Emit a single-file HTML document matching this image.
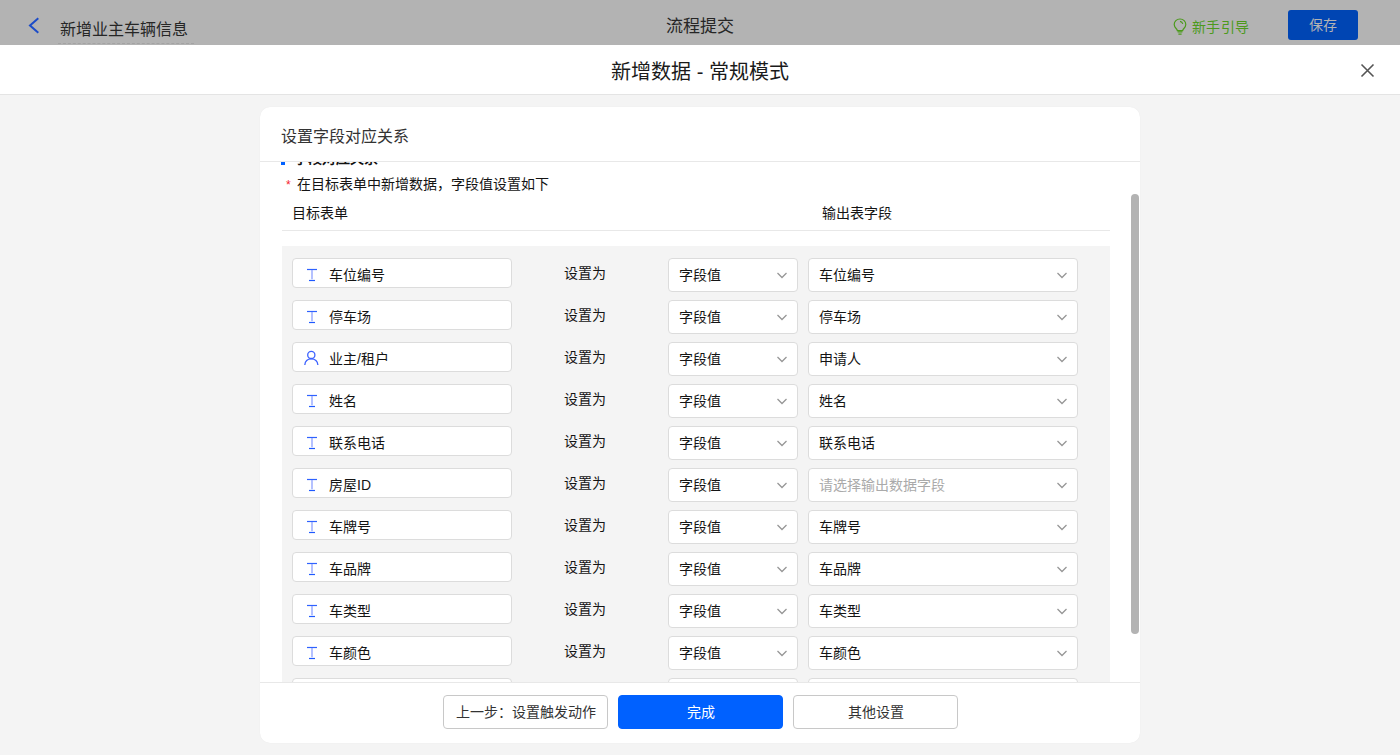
<!DOCTYPE html>
<html lang="zh-CN"><head><meta charset="utf-8">
<style>
*{box-sizing:border-box;margin:0;padding:0}
html,body{width:1400px;height:755px;overflow:hidden}
body{font-family:"Liberation Sans",sans-serif;background:#f4f4f4;position:relative;color:#141414}
.a{position:absolute;white-space:nowrap}
#top{left:0;top:0;width:1400px;height:45px;background:#b3b3b3}
#mh{left:0;top:45px;width:1400px;height:50px;background:#fff;border-bottom:1px solid #e4e4e4}
#card{left:260px;top:107px;width:880px;height:636px;background:#fff;border-radius:10px;overflow:hidden;box-shadow:0 0 1px rgba(0,0,0,0.08)}
.inp{position:absolute;left:10px;width:220px;height:30px;background:#fff;border:1px solid #dcdcdc;border-radius:4px}
.sel{position:absolute;height:34px;background:#fff;border:1px solid #dcdcdc;border-radius:4px}
.t14{font-size:14px;line-height:20px}
.chev{position:absolute}
.btn{position:absolute;top:588px;width:165px;height:34px;border:1px solid #c8c8c8;border-radius:4px;background:#fff;font-size:14px;line-height:32px;text-align:center;color:#333}
</style></head>
<body>
<div id="top" class="a">
  <svg class="a" style="left:28px;top:17px" width="12" height="17" viewBox="0 0 12 17"><path d="M10.3 1.3 L2 8.5 L10.3 15.7" fill="none" stroke="#1c4cc8" stroke-width="2"/></svg>
  <div class="a" style="left:60px;top:19px;font-size:16px;line-height:22px;color:#262626">新增业主车辆信息</div>
  <div class="a" style="left:58px;top:43px;width:136px;border-top:1px dashed #a3a3a3"></div>
  <div class="a" style="left:666px;top:16px;font-size:17px;line-height:22px;color:#262626">流程提交</div>
  <svg class="a" style="left:1173px;top:18px" width="14" height="18" viewBox="0 0 14 18"><path d="M7 1 C3.6 1 1.2 3.5 1.2 6.4 C1.2 8.8 2.6 10 3.9 11.4 L4.3 12.6 L9.7 12.6 L10.1 11.4 C11.4 10 12.8 8.8 12.8 6.4 C12.8 3.5 10.4 1 7 1 Z" fill="none" stroke="#4c9a1c" stroke-width="1.2"/><path d="M7 3.4 C8.3 3.6 9.5 4.6 9.8 6" fill="none" stroke="#4c9a1c" stroke-width="1.1"/><path d="M4.6 13.9 H9.4 M5.4 16.1 H8.6" stroke="#4c9a1c" stroke-width="1.1"/></svg>
  <div class="a" style="left:1192px;top:17px;font-size:14px;line-height:20px;color:#4c9a1c;letter-spacing:0.3px">新手引导</div>
  <div class="a" style="left:1288px;top:10px;width:70px;height:30px;background:#0045b3;border-radius:3px;color:#b3b3b3;font-size:14px;line-height:30px;text-align:center">保存</div>
</div>
<div id="mh" class="a">
  <div class="a" style="left:0;width:1400px;top:13px;text-align:center;font-size:20px;line-height:28px;color:#1a1a1a">新增数据 - 常规模式</div>
  <svg class="a" style="left:1360px;top:18px" width="15" height="15" viewBox="0 0 15 15"><path d="M1.5 1.5 L13.5 13.5 M13.5 1.5 L1.5 13.5" stroke="#555" stroke-width="1.6"/></svg>
</div>
<div id="card" class="a">
  <div class="a" style="left:21px;top:19px;font-size:16px;line-height:22px;color:#333">设置字段对应关系</div>
  <div class="a" style="left:0;top:54px;width:880px;height:1px;background:#e8e8e8"></div>
  <div class="a" id="scroll" style="left:0;top:55px;width:880px;height:520px;overflow:hidden">
    <div class="a" style="left:21px;top:-1px;width:4px;height:4px;background:#0061ff"></div>
    <div class="a" style="left:34px;top:-14px;font-size:14px;line-height:20px;font-weight:bold;color:#111">字段对应关系</div>
    <div class="a" style="left:26px;top:15px;font-size:12px;line-height:16px;color:#f5222d">*</div>
    <div class="a t14" style="left:37px;top:12px">在目标表单中新增数据，字段值设置如下</div>
    <div class="a t14" style="left:32px;top:41px">目标表单</div>
    <div class="a t14" style="left:562px;top:41px">输出表字段</div>
    <div class="a" style="left:22px;top:68px;width:828px;height:1px;background:#e8e8e8"></div>
    <div class="a" id="grid" style="left:22px;top:84px;width:828px;height:600px;background:#f4f4f4">
<div class="inp" style="top:12px"><svg class="a" style="left:13px;top:9px" width="12" height="14" viewBox="0 0 12 14"><path d="M1 1.5 H11" stroke="#2f62ff" stroke-width="1.2"/><path d="M6 2 V11.3" stroke="#8398ff" stroke-width="1.2"/><path d="M3 12.5 H9" stroke="#1f5aff" stroke-width="1.2"/></svg><div class="a t14" style="left:36px;top:6px">车位编号</div></div>
<div class="a t14" style="left:282px;top:17px">设置为</div>
<div class="sel" style="left:386px;top:12px;width:130px"><div class="a t14" style="left:10px;top:6px">字段值</div><svg class="chev" style="right:9px;top:13px" width="12" height="8" viewBox="0 0 12 8"><path d="M1.5 1 L6 5.5 L10.5 1" fill="none" stroke="#969696" stroke-width="1.25"/></svg></div>
<div class="sel" style="left:526px;top:12px;width:270px"><div class="a t14" style="left:10px;top:6px">车位编号</div><svg class="chev" style="right:9px;top:13px" width="12" height="8" viewBox="0 0 12 8"><path d="M1.5 1 L6 5.5 L10.5 1" fill="none" stroke="#969696" stroke-width="1.25"/></svg></div>
<div class="inp" style="top:54px"><svg class="a" style="left:13px;top:9px" width="12" height="14" viewBox="0 0 12 14"><path d="M1 1.5 H11" stroke="#2f62ff" stroke-width="1.2"/><path d="M6 2 V11.3" stroke="#8398ff" stroke-width="1.2"/><path d="M3 12.5 H9" stroke="#1f5aff" stroke-width="1.2"/></svg><div class="a t14" style="left:36px;top:6px">停车场</div></div>
<div class="a t14" style="left:282px;top:59px">设置为</div>
<div class="sel" style="left:386px;top:54px;width:130px"><div class="a t14" style="left:10px;top:6px">字段值</div><svg class="chev" style="right:9px;top:13px" width="12" height="8" viewBox="0 0 12 8"><path d="M1.5 1 L6 5.5 L10.5 1" fill="none" stroke="#969696" stroke-width="1.25"/></svg></div>
<div class="sel" style="left:526px;top:54px;width:270px"><div class="a t14" style="left:10px;top:6px">停车场</div><svg class="chev" style="right:9px;top:13px" width="12" height="8" viewBox="0 0 12 8"><path d="M1.5 1 L6 5.5 L10.5 1" fill="none" stroke="#969696" stroke-width="1.25"/></svg></div>
<div class="inp" style="top:96px"><svg class="a" style="left:9px;top:6px" width="18" height="18" viewBox="0 0 18 18"><circle cx="9.3" cy="5.9" r="3.6" fill="none" stroke="#3c62ff" stroke-width="1.3"/><path d="M2.8 16 C3.1 12.3 5.7 9.9 9.3 9.9 C12.9 9.9 15.5 12.3 15.9 16" fill="none" stroke="#3c62ff" stroke-width="1.3"/></svg><div class="a t14" style="left:36px;top:6px">业主/租户</div></div>
<div class="a t14" style="left:282px;top:101px">设置为</div>
<div class="sel" style="left:386px;top:96px;width:130px"><div class="a t14" style="left:10px;top:6px">字段值</div><svg class="chev" style="right:9px;top:13px" width="12" height="8" viewBox="0 0 12 8"><path d="M1.5 1 L6 5.5 L10.5 1" fill="none" stroke="#969696" stroke-width="1.25"/></svg></div>
<div class="sel" style="left:526px;top:96px;width:270px"><div class="a t14" style="left:10px;top:6px">申请人</div><svg class="chev" style="right:9px;top:13px" width="12" height="8" viewBox="0 0 12 8"><path d="M1.5 1 L6 5.5 L10.5 1" fill="none" stroke="#969696" stroke-width="1.25"/></svg></div>
<div class="inp" style="top:138px"><svg class="a" style="left:13px;top:9px" width="12" height="14" viewBox="0 0 12 14"><path d="M1 1.5 H11" stroke="#2f62ff" stroke-width="1.2"/><path d="M6 2 V11.3" stroke="#8398ff" stroke-width="1.2"/><path d="M3 12.5 H9" stroke="#1f5aff" stroke-width="1.2"/></svg><div class="a t14" style="left:36px;top:6px">姓名</div></div>
<div class="a t14" style="left:282px;top:143px">设置为</div>
<div class="sel" style="left:386px;top:138px;width:130px"><div class="a t14" style="left:10px;top:6px">字段值</div><svg class="chev" style="right:9px;top:13px" width="12" height="8" viewBox="0 0 12 8"><path d="M1.5 1 L6 5.5 L10.5 1" fill="none" stroke="#969696" stroke-width="1.25"/></svg></div>
<div class="sel" style="left:526px;top:138px;width:270px"><div class="a t14" style="left:10px;top:6px">姓名</div><svg class="chev" style="right:9px;top:13px" width="12" height="8" viewBox="0 0 12 8"><path d="M1.5 1 L6 5.5 L10.5 1" fill="none" stroke="#969696" stroke-width="1.25"/></svg></div>
<div class="inp" style="top:180px"><svg class="a" style="left:13px;top:9px" width="12" height="14" viewBox="0 0 12 14"><path d="M1 1.5 H11" stroke="#2f62ff" stroke-width="1.2"/><path d="M6 2 V11.3" stroke="#8398ff" stroke-width="1.2"/><path d="M3 12.5 H9" stroke="#1f5aff" stroke-width="1.2"/></svg><div class="a t14" style="left:36px;top:6px">联系电话</div></div>
<div class="a t14" style="left:282px;top:185px">设置为</div>
<div class="sel" style="left:386px;top:180px;width:130px"><div class="a t14" style="left:10px;top:6px">字段值</div><svg class="chev" style="right:9px;top:13px" width="12" height="8" viewBox="0 0 12 8"><path d="M1.5 1 L6 5.5 L10.5 1" fill="none" stroke="#969696" stroke-width="1.25"/></svg></div>
<div class="sel" style="left:526px;top:180px;width:270px"><div class="a t14" style="left:10px;top:6px">联系电话</div><svg class="chev" style="right:9px;top:13px" width="12" height="8" viewBox="0 0 12 8"><path d="M1.5 1 L6 5.5 L10.5 1" fill="none" stroke="#969696" stroke-width="1.25"/></svg></div>
<div class="inp" style="top:222px"><svg class="a" style="left:13px;top:9px" width="12" height="14" viewBox="0 0 12 14"><path d="M1 1.5 H11" stroke="#2f62ff" stroke-width="1.2"/><path d="M6 2 V11.3" stroke="#8398ff" stroke-width="1.2"/><path d="M3 12.5 H9" stroke="#1f5aff" stroke-width="1.2"/></svg><div class="a t14" style="left:36px;top:6px">房屋ID</div></div>
<div class="a t14" style="left:282px;top:227px">设置为</div>
<div class="sel" style="left:386px;top:222px;width:130px"><div class="a t14" style="left:10px;top:6px">字段值</div><svg class="chev" style="right:9px;top:13px" width="12" height="8" viewBox="0 0 12 8"><path d="M1.5 1 L6 5.5 L10.5 1" fill="none" stroke="#969696" stroke-width="1.25"/></svg></div>
<div class="sel" style="left:526px;top:222px;width:270px"><div class="a t14" style="left:10px;top:6px;color:#aaa">请选择输出数据字段</div><svg class="chev" style="right:9px;top:13px" width="12" height="8" viewBox="0 0 12 8"><path d="M1.5 1 L6 5.5 L10.5 1" fill="none" stroke="#969696" stroke-width="1.25"/></svg></div>
<div class="inp" style="top:264px"><svg class="a" style="left:13px;top:9px" width="12" height="14" viewBox="0 0 12 14"><path d="M1 1.5 H11" stroke="#2f62ff" stroke-width="1.2"/><path d="M6 2 V11.3" stroke="#8398ff" stroke-width="1.2"/><path d="M3 12.5 H9" stroke="#1f5aff" stroke-width="1.2"/></svg><div class="a t14" style="left:36px;top:6px">车牌号</div></div>
<div class="a t14" style="left:282px;top:269px">设置为</div>
<div class="sel" style="left:386px;top:264px;width:130px"><div class="a t14" style="left:10px;top:6px">字段值</div><svg class="chev" style="right:9px;top:13px" width="12" height="8" viewBox="0 0 12 8"><path d="M1.5 1 L6 5.5 L10.5 1" fill="none" stroke="#969696" stroke-width="1.25"/></svg></div>
<div class="sel" style="left:526px;top:264px;width:270px"><div class="a t14" style="left:10px;top:6px">车牌号</div><svg class="chev" style="right:9px;top:13px" width="12" height="8" viewBox="0 0 12 8"><path d="M1.5 1 L6 5.5 L10.5 1" fill="none" stroke="#969696" stroke-width="1.25"/></svg></div>
<div class="inp" style="top:306px"><svg class="a" style="left:13px;top:9px" width="12" height="14" viewBox="0 0 12 14"><path d="M1 1.5 H11" stroke="#2f62ff" stroke-width="1.2"/><path d="M6 2 V11.3" stroke="#8398ff" stroke-width="1.2"/><path d="M3 12.5 H9" stroke="#1f5aff" stroke-width="1.2"/></svg><div class="a t14" style="left:36px;top:6px">车品牌</div></div>
<div class="a t14" style="left:282px;top:311px">设置为</div>
<div class="sel" style="left:386px;top:306px;width:130px"><div class="a t14" style="left:10px;top:6px">字段值</div><svg class="chev" style="right:9px;top:13px" width="12" height="8" viewBox="0 0 12 8"><path d="M1.5 1 L6 5.5 L10.5 1" fill="none" stroke="#969696" stroke-width="1.25"/></svg></div>
<div class="sel" style="left:526px;top:306px;width:270px"><div class="a t14" style="left:10px;top:6px">车品牌</div><svg class="chev" style="right:9px;top:13px" width="12" height="8" viewBox="0 0 12 8"><path d="M1.5 1 L6 5.5 L10.5 1" fill="none" stroke="#969696" stroke-width="1.25"/></svg></div>
<div class="inp" style="top:348px"><svg class="a" style="left:13px;top:9px" width="12" height="14" viewBox="0 0 12 14"><path d="M1 1.5 H11" stroke="#2f62ff" stroke-width="1.2"/><path d="M6 2 V11.3" stroke="#8398ff" stroke-width="1.2"/><path d="M3 12.5 H9" stroke="#1f5aff" stroke-width="1.2"/></svg><div class="a t14" style="left:36px;top:6px">车类型</div></div>
<div class="a t14" style="left:282px;top:353px">设置为</div>
<div class="sel" style="left:386px;top:348px;width:130px"><div class="a t14" style="left:10px;top:6px">字段值</div><svg class="chev" style="right:9px;top:13px" width="12" height="8" viewBox="0 0 12 8"><path d="M1.5 1 L6 5.5 L10.5 1" fill="none" stroke="#969696" stroke-width="1.25"/></svg></div>
<div class="sel" style="left:526px;top:348px;width:270px"><div class="a t14" style="left:10px;top:6px">车类型</div><svg class="chev" style="right:9px;top:13px" width="12" height="8" viewBox="0 0 12 8"><path d="M1.5 1 L6 5.5 L10.5 1" fill="none" stroke="#969696" stroke-width="1.25"/></svg></div>
<div class="inp" style="top:390px"><svg class="a" style="left:13px;top:9px" width="12" height="14" viewBox="0 0 12 14"><path d="M1 1.5 H11" stroke="#2f62ff" stroke-width="1.2"/><path d="M6 2 V11.3" stroke="#8398ff" stroke-width="1.2"/><path d="M3 12.5 H9" stroke="#1f5aff" stroke-width="1.2"/></svg><div class="a t14" style="left:36px;top:6px">车颜色</div></div>
<div class="a t14" style="left:282px;top:395px">设置为</div>
<div class="sel" style="left:386px;top:390px;width:130px"><div class="a t14" style="left:10px;top:6px">字段值</div><svg class="chev" style="right:9px;top:13px" width="12" height="8" viewBox="0 0 12 8"><path d="M1.5 1 L6 5.5 L10.5 1" fill="none" stroke="#969696" stroke-width="1.25"/></svg></div>
<div class="sel" style="left:526px;top:390px;width:270px"><div class="a t14" style="left:10px;top:6px">车颜色</div><svg class="chev" style="right:9px;top:13px" width="12" height="8" viewBox="0 0 12 8"><path d="M1.5 1 L6 5.5 L10.5 1" fill="none" stroke="#969696" stroke-width="1.25"/></svg></div>
<div class="inp" style="top:432px"><svg class="a" style="left:13px;top:9px" width="12" height="14" viewBox="0 0 12 14"><path d="M1 1.5 H11" stroke="#2f62ff" stroke-width="1.2"/><path d="M6 2 V11.3" stroke="#8398ff" stroke-width="1.2"/><path d="M3 12.5 H9" stroke="#1f5aff" stroke-width="1.2"/></svg><div class="a t14" style="left:36px;top:6px">车备注</div></div>
<div class="a t14" style="left:282px;top:437px">设置为</div>
<div class="sel" style="left:386px;top:432px;width:130px"><div class="a t14" style="left:10px;top:6px">字段值</div><svg class="chev" style="right:9px;top:13px" width="12" height="8" viewBox="0 0 12 8"><path d="M1.5 1 L6 5.5 L10.5 1" fill="none" stroke="#969696" stroke-width="1.25"/></svg></div>
<div class="sel" style="left:526px;top:432px;width:270px"><div class="a t14" style="left:10px;top:6px">车备注</div><svg class="chev" style="right:9px;top:13px" width="12" height="8" viewBox="0 0 12 8"><path d="M1.5 1 L6 5.5 L10.5 1" fill="none" stroke="#969696" stroke-width="1.25"/></svg></div>
    </div>
  </div>
  <div class="a" style="left:871px;top:87px;width:8px;height:440px;background:#b3b3b3;border-radius:4px"></div>
  <div class="a" style="left:0;top:575px;width:880px;height:1px;background:#e8e8e8"></div>
  <div class="btn" style="left:183px">上一步：设置触发动作</div>
  <div class="btn" style="left:358px;background:#0061ff;border-color:#0061ff;color:#fff">完成</div>
  <div class="btn" style="left:533px">其他设置</div>
</div>
</body></html>
